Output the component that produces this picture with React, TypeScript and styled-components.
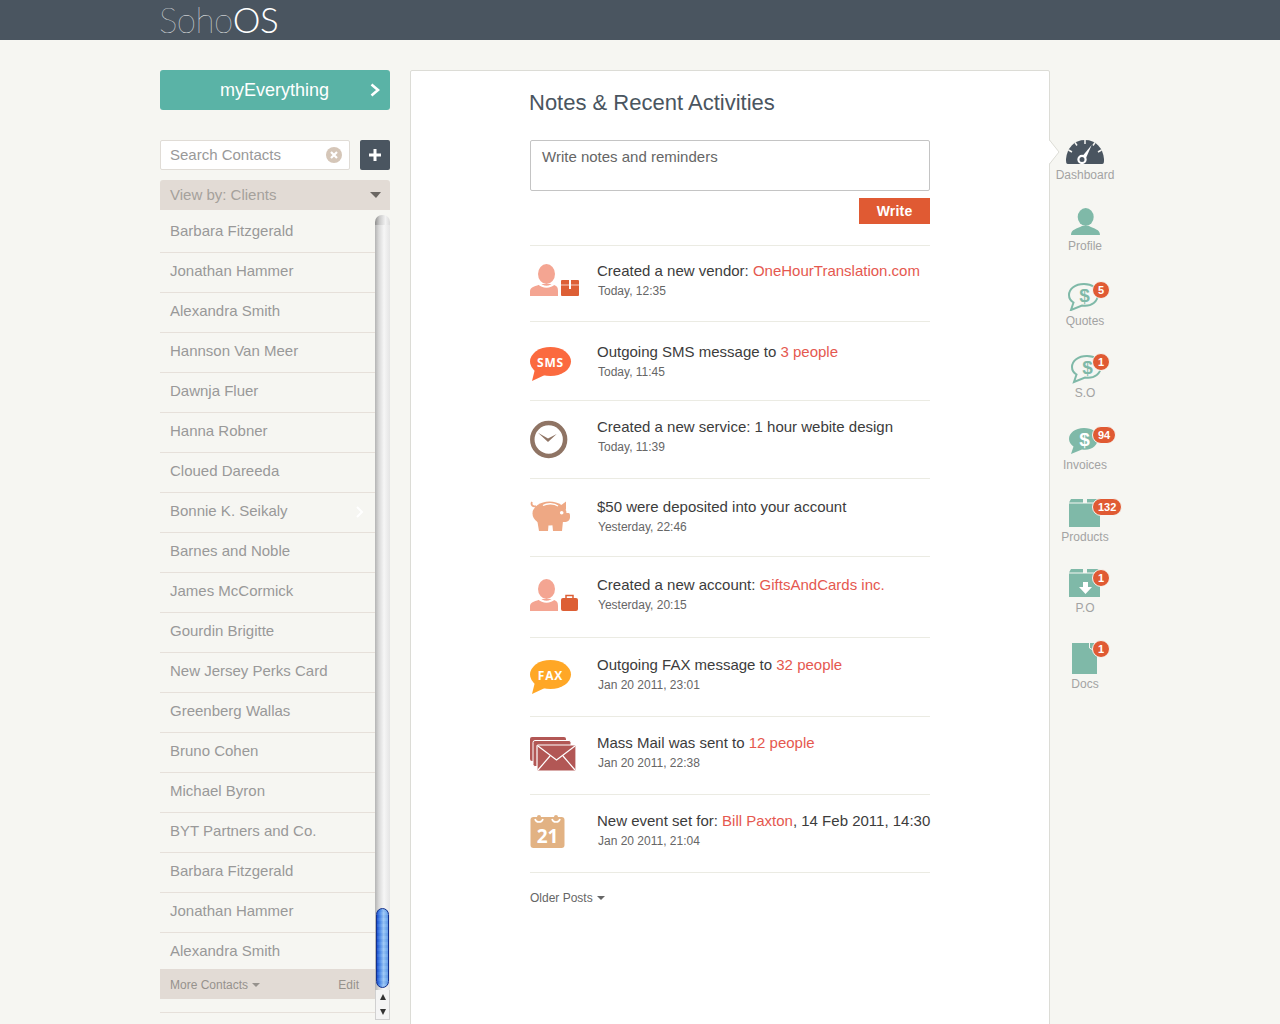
import React from "react";
import styled, { createGlobalStyle } from "styled-components";

const Global = createGlobalStyle`
  html, body { margin: 0; padding: 0; height: 1024px; overflow: hidden; background: #f6f6f2; }
  body { font-family: "Liberation Sans", Arial, sans-serif; }
  * { box-sizing: border-box; }
`;

const Page = styled.div`
  width: 1280px;
  height: 1024px;
  overflow: hidden;
  background: #f6f6f2;
`;
const Header = styled.header`
  height: 40px;
  background: #4a5560;
  padding-left: 159px;
  display: flex;
  align-items: center;
`;
const Logo = styled.div`
  font-family: Lato, sans-serif;
  font-size: 35px;
  line-height: 40px;
  color: #fff;
  margin-top: -2px;
`;
const LogoThin = styled.span`
  font-weight: 100;
  letter-spacing: -0.5px;
`;
const LogoBold = styled.span`
  font-weight: 300;
  letter-spacing: -0.5px;
`;
const Body = styled.div`
  display: flex;
  align-items: flex-start;
  padding: 30px 0 0 160px;
`;
const Sidebar = styled.aside`
  width: 230px;
  margin-right: 20px;
  flex: none;
`;
const MainButton = styled.div`
  height: 40px;
  border-radius: 3px;
  background: #5ab3a6;
  color: #fff;
  font-size: 18px;
  display: flex;
  align-items: center;
  position: relative;
  padding-left: 60px;
`;
const Chevron = styled.svg`
  position: absolute;
  right: 10px;
  top: 13px;
`;
const SearchRow = styled.div`
  display: flex;
  gap: 10px;
  margin-top: 30px;
`;
const SearchBox = styled.div`
  width: 190px;
  height: 30px;
  background: #fff;
  border: 1px solid #e0dcd6;
  border-radius: 2px;
  padding: 0 6px 0 9px;
  display: flex;
  align-items: center;
  justify-content: space-between;
  font-size: 15px;
  line-height: 26px;
  color: #999;
`;
const ClearIcon = styled.svg`
  flex: none;
`;
const PlusButton = styled.div`
  width: 30px;
  height: 30px;
  background: #4a5560;
  border-radius: 2px;
  display: flex;
  align-items: center;
  justify-content: center;
`;
const ViewBy = styled.div`
  margin-top: 10px;
  height: 30px;
  background: #e2dbd5;
  border-radius: 3px 3px 0 0;
  padding: 0 10px;
  display: flex;
  align-items: center;
  justify-content: space-between;
  font-size: 15px;
  line-height: 30px;
  color: #a5a19c;
`;
const CaretDown = styled.span`
  width: 0;
  height: 0;
  border-left: 6px solid transparent;
  border-right: 5px solid transparent;
  border-top: 6px solid #6a6662;
  margin-right: -1px;
`;
const ListWrap = styled.div`
  position: relative;
  height: 814px;
  overflow: hidden;
`;
const ContactList = styled.ul`
  list-style: none;
  margin: 0;
  padding: 2px 0 0;
  width: 215px;
`;
const Contact = styled.li`
  height: 40px;
  border-bottom: 1px solid #e6e0da;
  padding: 0 10px;
  font-size: 15px;
  line-height: 35px;
  color: #999;
  position: relative;
  &:first-child { height: 41px; line-height: 37px; }
`;
const RowChevron = styled.svg`
  position: absolute;
  right: 11px;
  top: 12px;
`;
const MoreBar = styled.div`
  position: absolute;
  left: 0;
  top: 759px;
  width: 215px;
  height: 30px;
  background: #e2dbd5;
  padding: 2px 16px 0 10px;
  display: flex;
  align-items: center;
  justify-content: space-between;
  font-size: 12px;
  color: #96928d;
`;
const MoreLabel = styled.span`
  display: flex;
  align-items: center;
  gap: 4px;
`;
const SmallCaret = styled.span<{ $color: string }>`
  display: inline-block;
  width: 0;
  height: 0;
  border-left: 4px solid transparent;
  border-right: 4px solid transparent;
  border-top: 4px solid ${(p) => p.$color};
`;
const Scroll = styled.div`
  position: absolute;
  left: 215px;
  top: 0;
  width: 15px;
  height: 810px;
  background: linear-gradient(90deg, #b4b4b4 0, #d8d8d8 25%, #f6f6f6 60%, #e4e4e4 100%);
`;
const ScrollCap = styled.div`
  position: absolute;
  left: 0;
  top: 0;
  width: 15px;
  height: 12px;
  background: #f6f6f2;
  &::after {
    content: "";
    position: absolute;
    left: 0;
    top: 5px;
    width: 15px;
    height: 10px;
    border-radius: 7px 7px 0 0;
    background: linear-gradient(90deg, #8f8f8f 0, #c9c9c9 30%, #f2f2f2 70%, #dadada 100%);
  }
`;
const ScrollThumb = styled.div`
  position: absolute;
  left: 1px;
  top: 698px;
  width: 13px;
  height: 80px;
  border-radius: 7px;
  border: 1px solid #12308c;
  background:
    repeating-linear-gradient(0deg, rgba(255, 255, 255, 0.05) 0 3px, rgba(0, 40, 160, 0.04) 3px 6px),
    linear-gradient(90deg, #1a4fd0 0, #4a88e8 25%, #9cc8f6 60%, #5f9cea 100%);
`;
const ScrollArrows = styled.div`
  position: absolute;
  left: 0;
  top: 780px;
  width: 15px;
  height: 30px;
  background: #f4f4f4;
  border: 1px solid #d0d0d0;
  border-top: 0;
  display: flex;
  flex-direction: column;
  align-items: center;
  justify-content: space-around;
`;
const ArrowUp = styled.span`
  width: 0;
  height: 0;
  border-left: 3px solid transparent;
  border-right: 3px solid transparent;
  border-bottom: 6px solid #333;
`;
const ArrowDown = styled.span`
  width: 0;
  height: 0;
  border-left: 3px solid transparent;
  border-right: 3px solid transparent;
  border-top: 6px solid #333;
`;
const Panel = styled.main`
  position: relative;
  width: 640px;
  height: 960px;
  flex: none;
  background: #fff;
  border: 1px solid #dcdcd6;
  border-radius: 2px 2px 0 0;
  padding: 0 119px 0 119px;
`;
const Notch = styled.svg`
  position: absolute;
  left: 638px;
  top: 66px;
`;
const Title = styled.h1`
  margin: 17px 0 0 -1px;
  font-size: 22px;
  line-height: 30px;
  font-weight: 400;
  color: #4a5560;
`;
const NoteBox = styled.div`
  margin-top: 22px;
  height: 51px;
  border: 1px solid #c4c4c4;
  border-radius: 2px;
  padding: 6px 11px;
  font-size: 15px;
  line-height: 20px;
  color: #666;
`;
const WriteRow = styled.div`
  display: flex;
  justify-content: flex-end;
  margin-top: 7px;
`;
const WriteButton = styled.div`
  width: 71px;
  height: 26px;
  background: #e05a33;
  color: #fff;
  font-size: 14px;
  font-weight: 700;
  letter-spacing: 0.2px;
  display: flex;
  align-items: center;
  justify-content: center;
`;
const Feed = styled.ul`
  list-style: none;
  margin: 21px 0 0;
  padding: 0;
  border-top: 1px solid #ebebe3;
`;
const FeedRow = styled.li<{ $h: number }>`
  height: ${(p) => p.$h}px;
  border-bottom: 1px solid #ebebe3;
  display: flex;
  align-items: flex-start;
`;
const FeedIcon = styled.div<{ $top: number }>`
  width: 67px;
  flex: none;
  margin-top: ${(p) => p.$top}px;
  height: 40px;
`;
const FeedText = styled.div<{ $top: number }>`
  margin-top: ${(p) => p.$top}px;
  white-space: nowrap;
`;
const FeedTitle = styled.div`
  font-size: 15px;
  line-height: 20px;
  color: #3c3c3c;
`;
const Accent = styled.span`
  color: #e5584f;
`;
const FeedDate = styled.div`
  font-size: 12px;
  line-height: 20px;
  color: #666;
  padding-left: 1px;
`;
const Older = styled.div`
  margin-top: 16px;
  font-size: 12px;
  line-height: 18px;
  color: #666;
  display: flex;
  align-items: center;
  gap: 4px;
`;
const Rail = styled.nav`
  width: 70px;
  flex: none;
  padding-top: 70px;
`;
const RailItem = styled.div<{ $h: number }>`
  height: ${(p) => p.$h}px;
  display: flex;
  flex-direction: column;
  align-items: center;
  justify-content: flex-end;
`;
const RailIconBox = styled.div<{ $gap: number }>`
  position: relative;
  width: 70px;
  height: 44px;
  flex: none;
  margin-bottom: ${(p) => p.$gap}px;
`;
const RailLabel = styled.div`
  font-size: 12px;
  line-height: 14px;
  color: #a3a3a3;
  height: 14px;
`;
const Badge = styled.span<{ $x: number; $y: number; $wide?: boolean }>`
  position: absolute;
  left: ${(p) => p.$x}px;
  top: ${(p) => p.$y}px;
  min-width: 18px;
  height: 18px;
  padding: 0 ${(p) => (p.$wide ? 5 : 0)}px;
  border-radius: 9px;
  background: #e05a33;
  border: 1px solid #f6f6f2;
  color: #fff;
  font-size: 11px;
  font-weight: 700;
  line-height: 16px;
  text-align: center;
`;

const Sms = ({ color, label }: { color: string; label: string }) => (
  <svg width="52" height="40" viewBox="0 0 52 40">
    <ellipse cx="20.5" cy="18.5" rx="20.5" ry="14.5" fill={color} />
    <path d="M5 26 L2 38 L17 31 Z" fill={color} />
    <text x="20.5" y="24" fontFamily="Open Sans, sans-serif" fontWeight="700" fontSize="12" letterSpacing="0.8" fill="#fff" textAnchor="middle">{label}</text>
  </svg>
);
const Person = ({ extra }: { extra: React.ReactNode }) => (
  <svg width="52" height="40" viewBox="0 0 52 40">
    <ellipse cx="16.5" cy="14" rx="8.5" ry="10" fill="#f4a592" />
    <path d="M0 36 V31 C0 27 6 26 11 24 L22 24 C27 26 28 27 28 31 V36 Z" fill="#f4a592" />
    <path d="M10 22 C12 27 21 27 23 22 L25 24 C21 29 12 29 8 24 Z" fill="#fff" />
    {extra}
  </svg>
);
const Clock = () => (
  <svg width="52" height="40" viewBox="0 0 52 40">
    <circle cx="18.7" cy="20.5" r="16.4" fill="none" stroke="#8f7464" strokeWidth="4.5" />
    <path d="M8 13.7 L18 19.5 L26.7 15 L18 23 Z" fill="#8f7464" />
  </svg>
);
const Pig = () => (
  <svg width="52" height="40" viewBox="0 0 52 40">
    <g fill="#eea884">
      <ellipse cx="19.5" cy="18.5" rx="17" ry="12" />
      <path d="M7 24 H19 L18 36 H9 Z M22 26 H33 L32 36 H23 Z" />
      <path d="M33 18 H38.5 C40 18 40 20 40 22 C40 25 38 27 34 27 H30 Z" />
      <path d="M30 11 L36 6.5 L36 15 Z" />
    </g>
    <path d="M2 7 C0.5 10 3 12 6 11" fill="none" stroke="#eea884" strokeWidth="1.8" />
    <path d="M13 10.5 C17 8 24 8 28 11" stroke="#fff" strokeWidth="1.4" fill="none" />
    <circle cx="31.7" cy="17.7" r="1.8" fill="#fff" />
  </svg>
);
const Mail = () => (
  <svg width="52" height="40" viewBox="0 0 52 40">
    <rect x="0" y="2" width="36" height="24" rx="2" fill="#b25755" />
    <rect x="3" y="5.5" width="38" height="26" rx="2" fill="#b25755" stroke="#fff" strokeWidth="1" />
    <rect x="7" y="10" width="39" height="26" rx="1" fill="#b25755" stroke="#fff" strokeWidth="1.2" />
    <path d="M8 11 L26.5 25 L45 11 M8 35 L20 21 M45 35 L33 21" stroke="#fff" strokeWidth="1.2" fill="none" />
  </svg>
);
const Calendar = () => (
  <svg width="52" height="40" viewBox="0 0 52 40">
    <rect x="0.5" y="6" width="34" height="31" rx="3" fill="#e2b283" />
    <rect x="7" y="4" width="4" height="5" rx="2" fill="#e2b283" />
    <rect x="24" y="4" width="4" height="5" rx="2" fill="#e2b283" />
    <path d="M5 8 C6 12 12 12 13 8 M22 8 C23 12 29 12 30 8" stroke="#fff" strokeWidth="1.6" fill="none" />
    <text x="17.5" y="32" fontFamily="Open Sans, sans-serif" fontWeight="700" fontSize="19" fill="#fff" textAnchor="middle">21</text>
  </svg>
);

const feed = [
  { h: 76, it: 14, tt: 15, icon: <Person extra={<g><rect x="31" y="20" width="18" height="16" rx="1" fill="#dd5f35" /><path d="M31 25 H49" stroke="#fff" strokeWidth="0.7" /><rect x="39" y="20" width="2" height="9" fill="#fff" /></g>} />, title: <>Created a new vendor: <Accent>OneHourTranslation.com</Accent></>, date: "Today, 12:35" },
  { h: 79, it: 21, tt: 20, icon: <Sms color="#fb6a3f" label="SMS" />, title: <>Outgoing SMS message to <Accent>3 people</Accent></>, date: "Today, 11:45" },
  { h: 78, it: 18, tt: 16, icon: <Clock />, title: <>Created a new service: 1 hour webite design</>, date: "Today, 11:39" },
  { h: 78, it: 16, tt: 18, icon: <Pig />, title: <>$50 were deposited into your account</>, date: "Yesterday, 22:46" },
  { h: 81, it: 18, tt: 18, icon: <Person extra={<g><rect x="31" y="23" width="17" height="13" rx="2" fill="#dd5f35" /><path d="M36 23 V20.5 H43 V23" fill="none" stroke="#dd5f35" strokeWidth="1.5" /></g>} />, title: <>Created a new account: <Accent>GiftsAndCards inc.</Accent></>, date: "Yesterday, 20:15" },
  { h: 79, it: 18, tt: 17, icon: <Sms color="#ffa726" label="FAX" />, title: <>Outgoing FAX message to <Accent>32 people</Accent></>, date: "Jan 20 2011, 23:01" },
  { h: 78, it: 18, tt: 16, icon: <Mail />, title: <>Mass Mail was sent to <Accent>12 people</Accent></>, date: "Jan 20 2011, 22:38" },
  { h: 78, it: 16, tt: 16, icon: <Calendar />, title: <>New event set for: <Accent>Bill Paxton</Accent>, 14 Feb 2011, 14:30</>, date: "Jan 20 2011, 21:04" },
];

const contacts = [
  "Barbara Fitzgerald", "Jonathan Hammer", "Alexandra Smith", "Hannson Van Meer", "Dawnja Fluer", "Hanna Robner",
  "Cloued Dareeda", "Bonnie K. Seikaly", "Barnes and Noble", "James McCormick", "Gourdin Brigitte", "New Jersey Perks Card",
  "Greenberg Wallas", "Bruno Cohen", "Michael Byron", "BYT Partners and Co.", "Barbara Fitzgerald", "Jonathan Hammer", "Alexandra Smith", "",
];

const TEAL = "#7fb9a8";
const RailSvg = ({ children }: { children: React.ReactNode }) => (
  <svg width="70" height="44" viewBox="0 0 70 44">{children}</svg>
);
const Bubble = ({ fill, dx = 0, dy = 0 }: { fill: boolean; dx?: number; dy?: number }) => (
  <g transform={`translate(${dx} ${dy})`}>
    <path
      d="M34 17 C25 17 19 22 19 28 C19 31 21 34 23.5 35.5 L21 43 L32 38.5 C42 40 48 34 48 27 C48 21 42 17 34 17 Z"
      fill={fill ? TEAL : "#f6f6f2"}
      stroke={TEAL}
      strokeWidth={fill ? 0 : 2}
    />
    <text x="34.5" y="35" fontFamily="Liberation Sans, sans-serif" fontWeight="700" fontSize="19" fill={fill ? "#fff" : TEAL} textAnchor="middle">$</text>
  </g>
);
const BoxShape = ({ children }: { children?: React.ReactNode }) => (
  <g>
    <path d="M19 19.5 L21 16 H33 V19.5 Z M37 19.5 V16 H48 L50 19.5 Z" fill={TEAL} />
    <rect x="19" y="20.5" width="31" height="23.5" fill={TEAL} />
    {children}
  </g>
);

const rail = [
  { label: "Dashboard", h: 42, gap: 3, icon: (
    <g>
      <path d="M18 43 C16 43 16 41 16 38 C17 27 24 19 35 19 C46 19 53 27 54 38 C54 41 54 43 52 43 Z" fill="#4a5560" />
      <path d="M35 19 V23 M25 21.5 L27 24.5 M45 21.5 L43 24.5 M18.5 29 L22 31 M51.5 29 L48 31" stroke="#f6f6f2" strokeWidth="1.5" />
      <circle cx="32" cy="38.5" r="3.6" fill="none" stroke="#fff" strokeWidth="2.2" />
      <path d="M32.5 35 L41.7 24 L36 37 Z" fill="#fff" />
    </g>
  ) },
  { label: "Profile", h: 71, gap: 4, icon: (
    <g fill={TEAL}>
      <ellipse cx="35.7" cy="26" rx="8" ry="9" />
      <path d="M21 44 C21 38 27 38 32 35 L39 35 C44 38 50 38 50 44 Z" />
    </g>
  ) },
  { label: "Quotes", h: 75, gap: 3, icon: <Bubble fill={false} />, badge: "5", bx: 42, by: 14 },
  { label: "S.O", h: 72, gap: 2, icon: <Bubble fill={false} dx={3} dy={-1} />, badge: "1", bx: 42, by: 13 },
  { label: "Invoices", h: 72, gap: 3, icon: <Bubble fill />, badge: "94", bx: 42, by: 15, wide: true },
  { label: "Products", h: 72, gap: 3, icon: <BoxShape />, badge: "132", bx: 42, by: 15, wide: true },
  { label: "P.O", h: 71, gap: 4, icon: (
    <BoxShape>
      <path d="M33 29 H38 V34 H42 L35.5 41 L29 34 H33 Z" fill="#fff" />
    </BoxShape>
  ), badge: "1", bx: 42, by: 16 },
  { label: "Docs", h: 76, gap: 0, icon: (
    <g>
      <path d="M22 10 H47 V41 H22 Z" fill={TEAL} />
      <path d="M39.5 10 V15 L43 17" fill="none" stroke="#f6f6f2" strokeWidth="1" />
    </g>
  ), badge: "1", bx: 42, by: 7 },
];

export default function App() {
  return (
    <Page>
      <Global />
      <Header>
        <Logo><LogoThin>Soho</LogoThin><LogoBold>OS</LogoBold></Logo>
      </Header>
      <Body>
        <Sidebar>
          <MainButton>
            myEverything
            <Chevron width="10" height="14" viewBox="0 0 10 14"><path d="M1.5 1.5 L8 7 L1.5 12.5" fill="none" stroke="#fff" strokeWidth="2.6" /></Chevron>
          </MainButton>
          <SearchRow>
            <SearchBox>
              Search Contacts
              <ClearIcon width="18" height="18" viewBox="0 0 18 18">
                <circle cx="9" cy="9" r="8" fill="#d5c6b8" />
                <path d="M6 6 L12 12 M12 6 L6 12" stroke="#fff" strokeWidth="2.2" />
              </ClearIcon>
            </SearchBox>
            <PlusButton>
              <svg width="12" height="12" viewBox="0 0 12 12"><path d="M6 0 V12 M0 6 H12" stroke="#fff" strokeWidth="3" /></svg>
            </PlusButton>
          </SearchRow>
          <ViewBy>View by: Clients<CaretDown /></ViewBy>
          <ListWrap>
            <ContactList>
              {contacts.map((c, i) => (
                <Contact key={i}>
                  {c}
                  {c === "Bonnie K. Seikaly" && (
                    <RowChevron width="9" height="14" viewBox="0 0 9 14"><path d="M2 2 L7 7 L2 12" fill="none" stroke="#fff" strokeWidth="2" /></RowChevron>
                  )}
                </Contact>
              ))}
            </ContactList>
            <MoreBar>
              <MoreLabel>More Contacts <SmallCaret $color="#96928d" /></MoreLabel>
              <span>Edit</span>
            </MoreBar>
            <Scroll>
              <ScrollCap />
              <ScrollThumb />
              <ScrollArrows><ArrowUp /><ArrowDown /></ScrollArrows>
            </Scroll>
          </ListWrap>
        </Sidebar>
        <Panel>
          <Notch width="12" height="32" viewBox="0 0 12 32">
            <path d="M0 3 L10 15 L0 27 Z" fill="#fff" />
            <path d="M0.5 3 L10 15 L0.5 27" fill="none" stroke="#dcdcd6" />
          </Notch>
          <Title>Notes &amp; Recent Activities</Title>
          <NoteBox>Write notes and reminders</NoteBox>
          <WriteRow><WriteButton>Write</WriteButton></WriteRow>
          <Feed>
            {feed.map((f, i) => (
              <FeedRow key={i} $h={f.h}>
                <FeedIcon $top={f.it}>{f.icon}</FeedIcon>
                <FeedText $top={f.tt}>
                  <FeedTitle>{f.title}</FeedTitle>
                  <FeedDate>{f.date}</FeedDate>
                </FeedText>
              </FeedRow>
            ))}
          </Feed>
          <Older>Older Posts <SmallCaret $color="#666" /></Older>
        </Panel>
        <Rail>
          {rail.map((r) => (
            <RailItem key={r.label} $h={r.h}>
              <RailIconBox $gap={r.gap}>
                <RailSvg>{r.icon}</RailSvg>
                {r.badge && <Badge $x={r.bx!} $y={r.by!} $wide={r.wide}>{r.badge}</Badge>}
              </RailIconBox>
              <RailLabel>{r.label}</RailLabel>
            </RailItem>
          ))}
        </Rail>
      </Body>
    </Page>
  );
}
